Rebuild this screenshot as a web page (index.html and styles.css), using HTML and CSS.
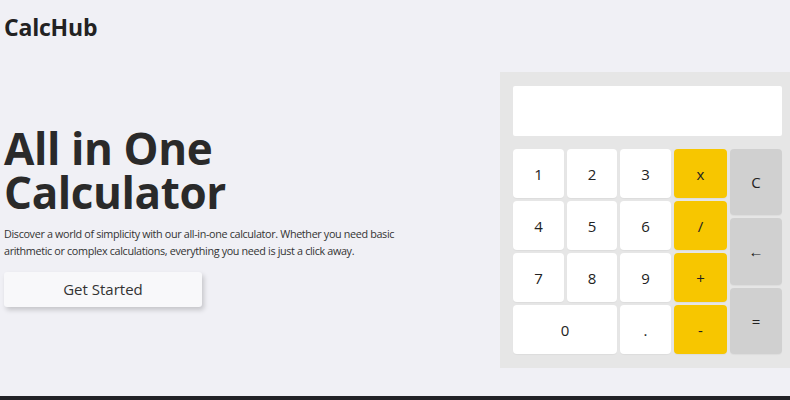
FILE: index.html
```html
<!DOCTYPE html>
<html lang="en">
<head>
<meta charset="utf-8">
<title>CalcHub</title>
<link rel="stylesheet" href="styles.css">
</head>
<body>
<header class="site-header">
  <div class="logo">CalcHub</div>
</header>
<main class="hero">
  <section class="hero-text">
    <h1 class="title">All in One<br>Calculator</h1>
    <p class="lead">Discover a world of simplicity with our all-in-one calculator. Whether you need basic arithmetic or complex calculations, everything you need is just a click away.</p>
    <button class="cta">Get Started</button>
  </section>
  <section class="calc">
    <div class="display"></div>
    <div class="keys">
      <div class="pad">
        <button class="key">1</button>
        <button class="key">2</button>
        <button class="key">3</button>
        <button class="key op">x</button>
        <button class="key">4</button>
        <button class="key">5</button>
        <button class="key">6</button>
        <button class="key op">/</button>
        <button class="key">7</button>
        <button class="key">8</button>
        <button class="key">9</button>
        <button class="key op">+</button>
        <button class="key zero">0</button>
        <button class="key">.</button>
        <button class="key op">-</button>
      </div>
      <div class="side">
        <button class="key fn">C</button>
        <button class="key fn">&larr;</button>
        <button class="key fn">=</button>
      </div>
    </div>
  </section>
</main>
<footer class="site-footer"></footer>
</body>
</html>
```

FILE: styles.css
```css
* { box-sizing: border-box; }

html, body {
  margin: 0;
  padding: 0;
}

body {
  background: #f0f0f5;
  color: #2b2b2b;
  font-family: "Open Sans", "Noto Sans", sans-serif;
  overflow-x: hidden;
}

.site-header {
  height: 56px;
  padding: 11px 4px 0;
}

.logo {
  font-size: 23px;
  font-weight: 700;
  color: #222;
  letter-spacing: -0.2px;
}

.hero {
  display: flex;
  align-items: center;
  justify-content: space-between;
  margin-top: 16px;
  margin-bottom: 28px;
}

.hero-text {
  width: 420px;
  padding-left: 4px;
  padding-bottom: 8px;
}

.title {
  margin: 0;
  font-size: 44px;
  line-height: 44px;
  font-weight: 700;
  color: #2a2a2a;
  letter-spacing: -0.4px;
}

.lead {
  margin: 11px 0 0;
  font-size: 10.8px;
  line-height: 17px;
  letter-spacing: -0.35px;
  color: #333;
}

.cta {
  margin-top: 13px;
  width: 198px;
  height: 35px;
  border: none;
  border-radius: 3px;
  background: #f8f8fa;
  box-shadow: 2px 3px 5px rgba(0, 0, 0, 0.18);
  font-family: inherit;
  font-size: 15px;
  color: #333;
}

.calc {
  width: 295px;
  flex: none;
  margin-right: -5px;
  background: #e6e6e6;
  padding: 14px 13px 14px;
}

.display {
  height: 50px;
  background: #fff;
  border-radius: 2px;
  margin-bottom: 13px;
}

.keys {
  display: flex;
  gap: 3px;
}

.pad {
  display: grid;
  grid-template-columns: 51px 50px 51px 53px;
  grid-auto-rows: 49px;
  gap: 3px;
}

.side {
  width: 52px;
  display: flex;
  flex-direction: column;
  gap: 3px;
}

.side .key {
  flex: 1;
}

.key {
  border: none;
  border-radius: 4px;
  background: #fff;
  font-family: inherit;
  font-size: 15px;
  color: #222;
  padding: 0;
  box-shadow: 0 1px 1px rgba(0, 0, 0, 0.04);
}

.key.op {
  background: #f7c600;
}

.key.fn {
  background: #d0d0d0;
}

.key.zero {
  grid-column: span 2;
}

.site-footer {
  height: 40px;
  background: #222226;
}
```
